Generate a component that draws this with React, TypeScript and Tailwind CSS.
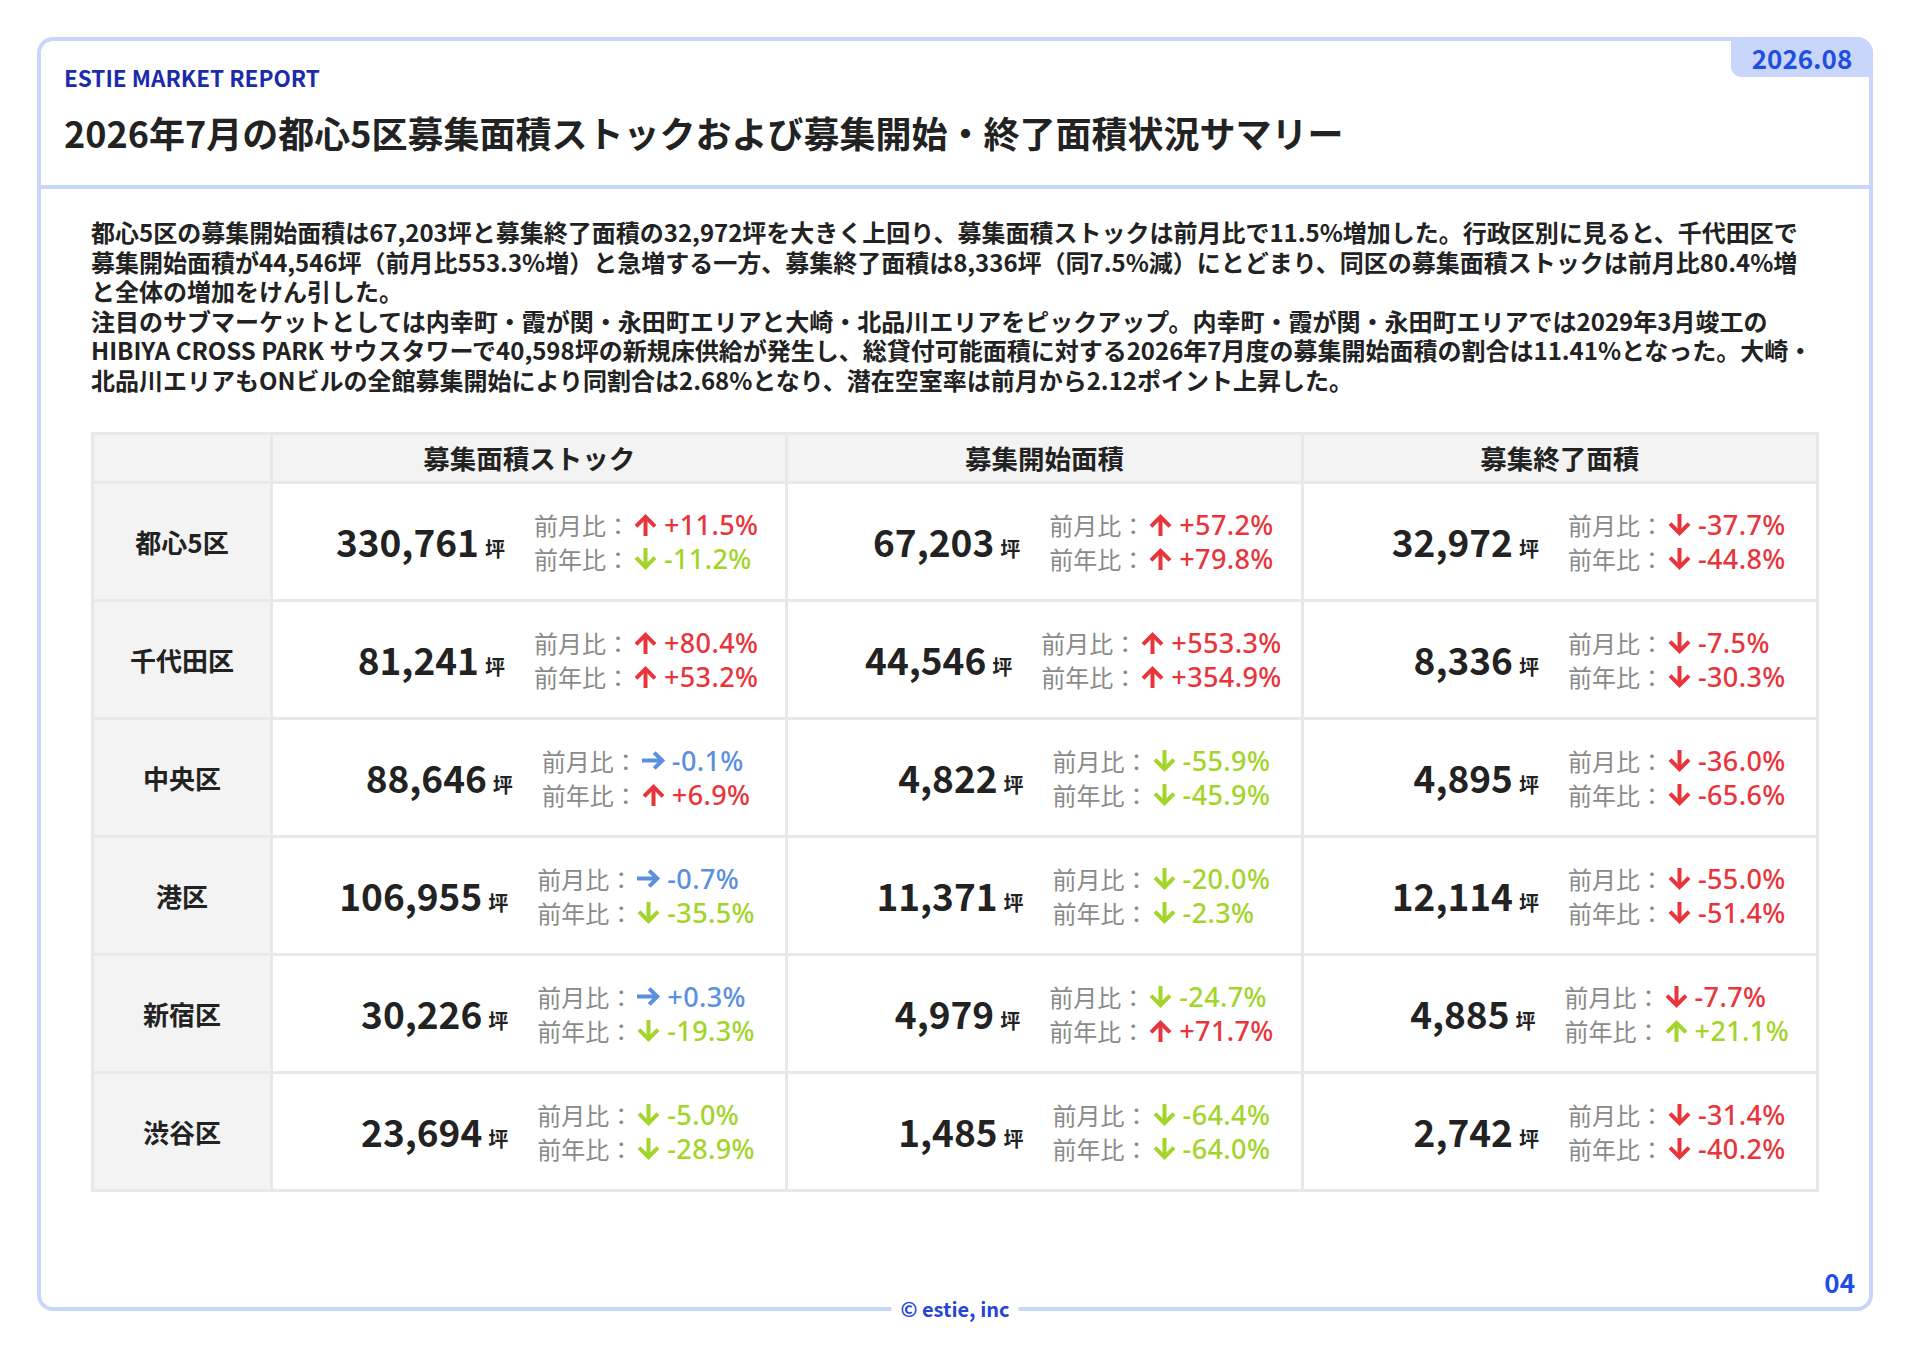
import React from 'react';

type Dir = 'up' | 'down' | 'flat';
type Tone = 'red' | 'green' | 'blue';

interface Change {
  dir: Dir;
  tone: Tone;
  value: string;
}

interface Metric {
  amount: string;
  mom: Change;
  yoy: Change;
}

interface Row {
  ward: string;
  stock: Metric;
  start: Metric;
  end: Metric;
}

const c = (dir: Dir, tone: Tone, value: string): Change => ({ dir, tone, value });

const rows: Row[] = [
  {
    ward: '都心5区',
    stock: { amount: '330,761', mom: c('up', 'red', '+11.5%'), yoy: c('down', 'green', '-11.2%') },
    start: { amount: '67,203', mom: c('up', 'red', '+57.2%'), yoy: c('up', 'red', '+79.8%') },
    end: { amount: '32,972', mom: c('down', 'red', '-37.7%'), yoy: c('down', 'red', '-44.8%') },
  },
  {
    ward: '千代田区',
    stock: { amount: '81,241', mom: c('up', 'red', '+80.4%'), yoy: c('up', 'red', '+53.2%') },
    start: { amount: '44,546', mom: c('up', 'red', '+553.3%'), yoy: c('up', 'red', '+354.9%') },
    end: { amount: '8,336', mom: c('down', 'red', '-7.5%'), yoy: c('down', 'red', '-30.3%') },
  },
  {
    ward: '中央区',
    stock: { amount: '88,646', mom: c('flat', 'blue', '-0.1%'), yoy: c('up', 'red', '+6.9%') },
    start: { amount: '4,822', mom: c('down', 'green', '-55.9%'), yoy: c('down', 'green', '-45.9%') },
    end: { amount: '4,895', mom: c('down', 'red', '-36.0%'), yoy: c('down', 'red', '-65.6%') },
  },
  {
    ward: '港区',
    stock: { amount: '106,955', mom: c('flat', 'blue', '-0.7%'), yoy: c('down', 'green', '-35.5%') },
    start: { amount: '11,371', mom: c('down', 'green', '-20.0%'), yoy: c('down', 'green', '-2.3%') },
    end: { amount: '12,114', mom: c('down', 'red', '-55.0%'), yoy: c('down', 'red', '-51.4%') },
  },
  {
    ward: '新宿区',
    stock: { amount: '30,226', mom: c('flat', 'blue', '+0.3%'), yoy: c('down', 'green', '-19.3%') },
    start: { amount: '4,979', mom: c('down', 'green', '-24.7%'), yoy: c('up', 'red', '+71.7%') },
    end: { amount: '4,885', mom: c('down', 'red', '-7.7%'), yoy: c('up', 'green', '+21.1%') },
  },
  {
    ward: '渋谷区',
    stock: { amount: '23,694', mom: c('down', 'green', '-5.0%'), yoy: c('down', 'green', '-28.9%') },
    start: { amount: '1,485', mom: c('down', 'green', '-64.4%'), yoy: c('down', 'green', '-64.0%') },
    end: { amount: '2,742', mom: c('down', 'red', '-31.4%'), yoy: c('down', 'red', '-40.2%') },
  },
];

const toneText: Record<Tone, string> = {
  red: 'text-[#e8353b]',
  green: 'text-[#a2d42a]',
  blue: 'text-[#5b8fe0]',
};

function Arrow({ dir }: { dir: Dir }) {
  if (dir === 'flat') {
    return (
      <svg width="25" height="19" viewBox="0 0 25 19" fill="none" stroke="currentColor" strokeWidth="4">
        <path d="M1 9.5H21.5" />
        <path d="M13.2 1.6L21.3 9.5 13.2 17.4" />
      </svg>
    );
  }
  return (
    <svg
      width="25"
      height="22"
      viewBox="0 0 25 22"
      fill="none"
      stroke="currentColor"
      strokeWidth="4"
      className={dir === 'down' ? 'rotate-180' : ''}
    >
      <path d="M12.5 22V3.6" />
      <path d="M3 12.4L12.5 2.9 22 12.4" />
    </svg>
  );
}

function ChangeLine({ label, change }: { label: string; change: Change }) {
  return (
    <div className="flex items-center whitespace-nowrap">
      <span className="text-[24px] text-[#8a8a8a]">{label}：</span>
      <span className={`ml-[3px] mr-[6px] flex items-center ${toneText[change.tone]}`}>
        <Arrow dir={change.dir} />
      </span>
      <span className={`font-['Noto_Sans',sans-serif] text-[27px] font-medium tracking-[0.4px] ${toneText[change.tone]}`}>
        {change.value}
      </span>
    </div>
  );
}

function MetricCell({ m }: { m: Metric }) {
  return (
    <div className="flex items-center justify-center gap-[29px] bg-white">
      <div className="flex w-[205px] items-baseline justify-end gap-[6px] text-[#222]">
        <span className="text-[37px] font-bold">{m.amount}</span>
        <span className="text-[20px] font-bold">坪</span>
      </div>
      <div className="flex flex-col leading-[34px]">
        <ChangeLine label="前月比" change={m.mom} />
        <ChangeLine label="前年比" change={m.yoy} />
      </div>
    </div>
  );
}

export default function App() {
  return (
    <div className="min-h-[1350px] bg-white p-[37px] font-['Noto_Sans_CJK_JP',sans-serif] text-[#222]">
      <div className="relative flex h-[1274px] flex-col rounded-[16px] border-[4px] border-[#c9d6fb]">
        {/* date tab */}
        <div className="absolute -right-[4px] -top-[4px] flex h-[40px] w-[142px] items-center justify-center rounded-bl-[10px] rounded-tr-[16px] bg-[#c9d6fb] text-[26px] font-bold text-[#1f4ee0]">
          2026.08
        </div>

        <header className="border-b-[4px] border-[#c9d6fb] px-[23px] pb-[31px] pt-[22px]">
          <p className="text-[22.5px] font-bold leading-[28px] text-[#1b2bab]">ESTIE MARKET REPORT</p>
          <h1 className="mt-[19px] text-[36px] font-bold leading-[44px] text-[#222]">
            2026年7月の都心5区募集面積ストックおよび募集開始・終了面積状況サマリー
          </h1>
        </header>

        <section className="px-[50px] pt-[28px]">
          <div className="text-[24px] font-bold leading-[29.5px] text-[#222]">
            <p>
              都心5区の募集開始面積は67,203坪と募集終了面積の32,972坪を大きく上回り、募集面積ストックは前月比で11.5%増加した。行政区別に見ると、千代田区で募集開始面積が44,546坪（前月比553.3%増）と急増する一方、募集終了面積は8,336坪（同7.5%減）にとどまり、同区の募集面積ストックは前月比80.4%増と全体の増加をけん引した。
            </p>
            <p>
              注目のサブマーケットとしては内幸町・霞が関・永田町エリアと大崎・北品川エリアをピックアップ。内幸町・霞が関・永田町エリアでは2029年3月竣工のHIBIYA CROSS PARK サウスタワーで40,598坪の新規床供給が発生し、総貸付可能面積に対する2026年7月度の募集開始面積の割合は11.41%となった。大崎・北品川エリアもONビルの全館募集開始により同割合は2.68%となり、潜在空室率は前月から2.12ポイント上昇した。
            </p>
          </div>

          <div className="mt-[38px] grid grid-cols-[176px_1fr_1fr_1fr] grid-rows-[46px_repeat(6,115px)] gap-[3px] bg-[#e8e8e8] p-[3px]">
            <div className="bg-[#f3f3f3]" />
            {['募集面積ストック', '募集開始面積', '募集終了面積'].map((h) => (
              <div key={h} className="flex items-center justify-center bg-[#f3f3f3] text-[26.5px] font-bold text-[#222]">
                {h}
              </div>
            ))}
            {rows.map((r) => (
              <React.Fragment key={r.ward}>
                <div className="flex items-center justify-center bg-[#f3f3f3] text-[26px] font-bold text-[#222]">
                  {r.ward}
                </div>
                <MetricCell m={r.stock} />
                <MetricCell m={r.start} />
                <MetricCell m={r.end} />
              </React.Fragment>
            ))}
          </div>
        </section>

        <div className="mt-auto self-end pb-[8px] pr-[14px] text-[26px] font-bold leading-[34px] text-[#1f4ee0]">04</div>

        {/* copyright sits on the bottom border */}
        <div className="absolute -bottom-[16px] left-1/2 -translate-x-1/2 bg-white px-[9px] text-[20px] font-bold leading-[28px] text-[#2544d6]">
          © estie, inc
        </div>
      </div>
    </div>
  );
}
